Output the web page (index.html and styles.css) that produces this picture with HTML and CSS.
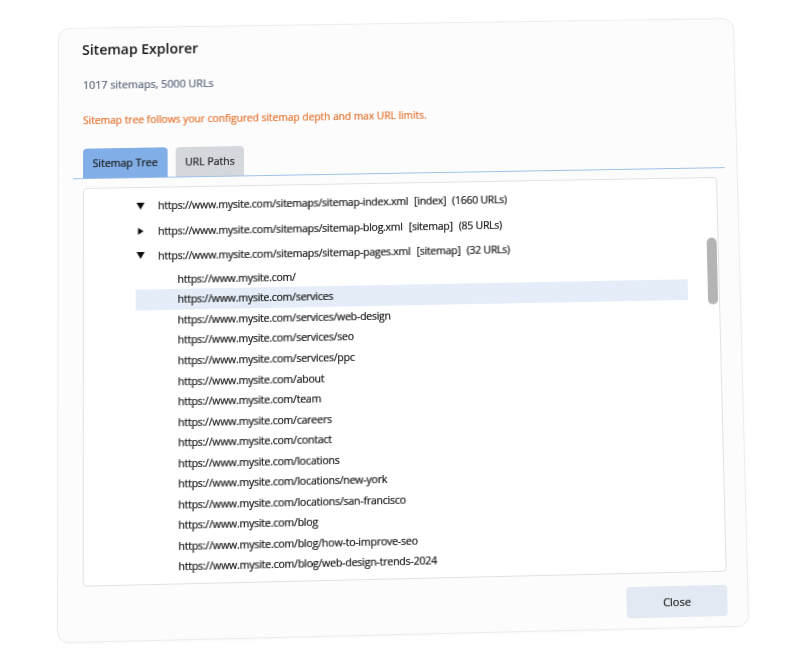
FILE: index.html
```html
<!DOCTYPE html>
<html lang="en">
<head>
<meta charset="utf-8">
<title>Sitemap Explorer</title>
<link rel="stylesheet" href="styles.css">
</head>
<body>
<div class="dialog" role="dialog" aria-labelledby="dlg-title">
  <h1 class="title" id="dlg-title">Sitemap Explorer</h1>
  <p class="summary">1017 sitemaps, 5000 URLs</p>
  <p class="note">Sitemap tree follows your configured sitemap depth and max URL limits.</p>

  <div class="tabs">
    <button class="tab active">Sitemap Tree</button>
    <button class="tab">URL Paths</button>
  </div>

  <div class="tree">
    <ul class="nodes">
      <li class="node parent">
        <span class="caret"><svg width="8" height="7" viewBox="0 0 8 7"><polygon points="0,0 8,0 4,7"/></svg></span>
        <span class="url">https://www.mysite.com/sitemaps/sitemap-index.xml</span>
        <span class="kind">[index]</span>
        <span class="count">(1660 URLs)</span>
      </li>
      <li class="node parent">
        <span class="caret"><svg width="8" height="8" viewBox="0 0 8 8"><polygon points="1.5,0.5 7,4 1.5,7.5"/></svg></span>
        <span class="url">https://www.mysite.com/sitemaps/sitemap-blog.xml</span>
        <span class="kind">[sitemap]</span>
        <span class="count">(85 URLs)</span>
      </li>
      <li class="node parent">
        <span class="caret"><svg width="8" height="7" viewBox="0 0 8 7"><polygon points="0,0 8,0 4,7"/></svg></span>
        <span class="url">https://www.mysite.com/sitemaps/sitemap-pages.xml</span>
        <span class="kind">[sitemap]</span>
        <span class="count">(32 URLs)</span>
      </li>
      <li class="node leaf first">https://www.mysite.com/</li>
      <li class="node leaf selected">https://www.mysite.com/services</li>
      <li class="node leaf">https://www.mysite.com/services/web-design</li>
      <li class="node leaf">https://www.mysite.com/services/seo</li>
      <li class="node leaf">https://www.mysite.com/services/ppc</li>
      <li class="node leaf">https://www.mysite.com/about</li>
      <li class="node leaf">https://www.mysite.com/team</li>
      <li class="node leaf">https://www.mysite.com/careers</li>
      <li class="node leaf">https://www.mysite.com/contact</li>
      <li class="node leaf">https://www.mysite.com/locations</li>
      <li class="node leaf">https://www.mysite.com/locations/new-york</li>
      <li class="node leaf">https://www.mysite.com/locations/san-francisco</li>
      <li class="node leaf">https://www.mysite.com/blog</li>
      <li class="node leaf">https://www.mysite.com/blog/how-to-improve-seo</li>
      <li class="node leaf">https://www.mysite.com/blog/web-design-trends-2024</li>
    </ul>
    <div class="thumb"></div>
  </div>

  <div class="footer">
    <button class="close">Close</button>
  </div>
</div>
</body>
</html>
```

FILE: styles.css
```css
* {
  box-sizing: border-box;
  margin: 0;
  padding: 0;
}

html,
body {
  background: #ffffff;
  min-height: 663px;
}

body {
  margin: 0;
  font-family: "Open Sans", "Noto Sans", "DejaVu Sans", sans-serif;
  color: #161616;
}

/* floating dialog, tilted slightly toward the viewer */
.dialog {
  width: 680px;
  height: 618px;
  padding: 13px 20px 10px 24px;
  display: flex;
  flex-direction: column;
  background: #fcfcfd;
  border: 1px solid #eaecef;
  border-radius: 12px;
  box-shadow: 0 1px 3px rgba(0, 0, 0, 0.03);
  -webkit-text-stroke: 0.18px currentColor;
  transform-origin: 0 0;
  transform: matrix3d(1.004694, -0.014598, 0, 0.0000149546,
                      -0.003976, 0.970319, 0, -0.0000390404,
                      0, 0, 1, 0,
                      58.034, 28.099, 0, 1);
}

.title {
  font-size: 14px;
  font-weight: 600;
  line-height: 18px;
  color: #151517;
  margin-left: -1px;
  -webkit-text-stroke: 0;
}

.summary {
  margin-top: 19.5px;
  font-size: 10.7px;
  line-height: 14px;
  color: #566174;
}

.note {
  margin-top: 22px;
  font-size: 10.2px;
  line-height: 14px;
  color: #e3712a;
}

/* tab strip */
.tabs {
  margin: 22.5px -8px 0 -10px;
  padding-left: 10px;
  display: flex;
  gap: 8px;
  border-bottom: 1px solid #9fc0e7;
}

.tab {
  height: 30px;
  padding: 0 9.5px;
  border: none;
  border-radius: 4px 4px 0 0;
  background: #d4d7dc;
  font-family: inherit;
  font-size: 10.5px;
  color: #1e1e1e;
  display: flex;
  align-items: center;
}

.tab.active {
  background: #81aee6;
  color: #141414;
}

/* tree panel */
.tree {
  position: relative;
  margin-top: 9px;
  height: 399px;
  padding-top: 5.5px;
  background: #ffffff;
  border: 1px solid #dee2e7;
  border-radius: 4px;
  overflow: hidden;
}

.nodes {
  list-style: none;
  margin-left: 51px;
  width: 550px;
  font-size: 10.5px;
  letter-spacing: -0.25px;
  color: #111111;
}

.node {
  display: flex;
  align-items: center;
  white-space: nowrap;
}

.node.parent {
  height: 25.4px;
}

.caret {
  width: 22.3px;
  display: flex;
  align-items: center;
  padding-left: 0.5px;
}

.caret svg {
  fill: #0d0d0d;
  display: block;
}

.kind,
.count {
  margin-left: 6px;
}

.node.leaf {
  height: 20.56px;
  padding-left: 41.5px;
}

.node.leaf.first {
  margin-top: 0.9px;
}

.node.selected {
  background: #e5edf8;
}

.thumb {
  position: absolute;
  top: 61px;
  right: 1px;
  width: 10px;
  height: 68px;
  border-radius: 5px;
  background: #b4b4b4;
}

/* footer */
.footer {
  margin-top: 13px;
  display: flex;
  justify-content: flex-end;
}

.close {
  width: 100px;
  height: 31px;
  border: none;
  border-radius: 4px;
  background: #e2e9f3;
  font-family: inherit;
  font-size: 11px;
  color: #222222;
}
```
